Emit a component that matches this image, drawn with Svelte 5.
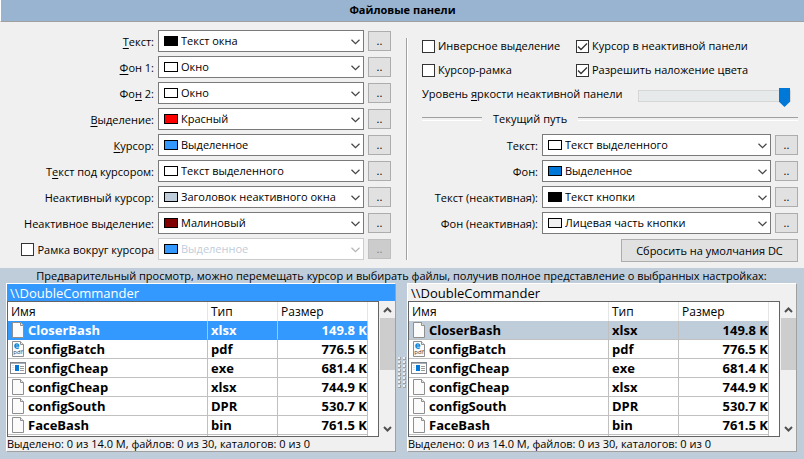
<script>
  const cursorColors = [
    { id: 'text', pre: '', key: 'Т', post: 'екст:', value: 'Текст окна', color: '#000000' },
    { id: 'back1', pre: '', key: 'Ф', post: 'он 1:', value: 'Окно', color: '#ffffff' },
    { id: 'back2', pre: 'Фо', key: 'н', post: ' 2:', value: 'Окно', color: '#ffffff' },
    { id: 'mark', pre: '', key: 'В', post: 'ыделение:', value: 'Красный', color: '#ff0000' },
    { id: 'cursor', pre: '', key: 'К', post: 'урсор:', value: 'Выделенное', color: '#3399ff' },
    { id: 'cursortext', pre: 'Т', key: 'е', post: 'кст под курсором:', value: 'Текст выделенного', color: '#ffffff' },
    { id: 'inactivecursor', pre: 'Неактивный курсор:', key: '', post: '', value: 'Заголовок неактивного окна', color: '#bfcddb' },
    { id: 'inactivemark', pre: 'Неактивное выделение:', key: '', post: '', value: 'Малиновый', color: '#800000' }
  ];
  const pathColors = [
    { id: 'ptext', label: 'Текст:', value: 'Текст выделенного', color: '#ffffff' },
    { id: 'pback', label: 'Фон:', value: 'Выделенное', color: '#0078d7' },
    { id: 'pitext', label: 'Текст (неактивная):', value: 'Текст кнопки', color: '#000000' },
    { id: 'piback', label: 'Фон (неактивная):', value: 'Лицевая часть кнопки', color: '#f0f0f0' }
  ];
  const files = [
    { name: 'CloserBash', type: 'xlsx', size: '149.8 K', icon: 'page' },
    { name: 'configBatch', type: 'pdf', size: '776.5 K', icon: 'pdf' },
    { name: 'configCheap', type: 'exe', size: '681.4 K', icon: 'exe' },
    { name: 'configCheap', type: 'xlsx', size: '744.9 K', icon: 'page' },
    { name: 'configSouth', type: 'DPR', size: '530.7 K', icon: 'page' },
    { name: 'FaceBash', type: 'bin', size: '761.5 K', icon: 'page' },
    { name: '', type: '', size: '', icon: 'page' }
  ];
  const dots = Array.from({ length: 8 }, (_, i) => i);

  let brightness = $state(100);
  let inverse = $state(false);
  let inactiveCursor = $state(true);
  let frameCursor = $state(false);
  let overlay = $state(true);
  let frameAround = $state(false);
</script>

{#snippet picker(id, value, color, disabled)}
  <div class="picker">
    <select {id} {disabled} aria-label={id === 'frame' ? 'Цвет рамки' : undefined}><option>{value}</option></select>
    <span class="swatch" style="background:{color}"></span>
    <svg class="chevron" class:dim={disabled} viewBox="0 0 9 6" width="9" height="6" aria-hidden="true">
      <path d="M0.5 0.8 L4.5 4.6 L8.5 0.8" />
    </svg>
  </div>
  <button class="more" {disabled}>..</button>
{/snippet}

{#snippet fileIcon(kind)}
  <svg class="icon" viewBox="0 0 16 18" width="16" height="18" aria-hidden="true">
    {#if kind === 'exe'}
      <rect x="0.5" y="3.5" width="15" height="11" fill="#fff" stroke="#80868c" />
      <path d="M1 4.5h14" stroke="#a9afb5" />
      <rect x="5" y="6" width="4" height="6" fill="#0078d7" />
      <path d="M10 7.5h4M10 9.5h4M10 11.5h4" stroke="#9a9a9a" />
      <path d="M2 6.5h2M2 8.5h2M2 10.5h2" stroke="#e1e1e1" />
    {:else}
      <path d="M2.500 1.500H10.500L13.500 4.500V16.500H2.500Z" fill="#fbfbfb" stroke="#8f8f8f" />
      <path d="M10.500 1.500V4.500H13.500" fill="#e9e9e9" stroke="#8f8f8f" />
      {#if kind === 'pdf'}
        <path d="M8.800 7.700C7.600 8.700 5 8.500 4.900 6.200 C4.800 3.200 8.900 3 8.700 6H5.200" fill="none" stroke="#0a84d8" stroke-width="1.300" />
        <text x="8" y="14" text-anchor="middle" font-size="6" font-weight="400" fill="#333">pdf</text>
      {/if}
    {/if}
  </svg>
{/snippet}

{#snippet panel(active)}
  <section class="panel" class:active>
    <div class="path">\\DoubleCommander</div>
    <div class="body">
      <div class="list">
        <table>
          <colgroup><col /><col class="c-type" /><col class="c-size" /><col class="c-rest" /></colgroup>
          <thead><tr><th>Имя</th><th>Тип</th><th>Размер</th><th class="rest"></th></tr></thead>
          <tbody>
            {#each files as f, i}
              <tr class:current={i === 0}>
                <td class="name"><div>{@render fileIcon(f.icon)}<span>{f.name}</span></div></td>
                <td>{f.type}</td>
                <td class="size">{f.size}</td>
                <td class="rest"></td>
              </tr>
            {/each}
          </tbody>
        </table>
      </div>
      <div class="scroll">
        <button class="arrow" aria-label="Вверх">
          <svg viewBox="0 0 9 6" width="9" height="6"><path d="M1 5 L4.500 1.500 L8 5" /></svg>
        </button>
        <div class="rail"><div class="thumb"></div></div>
        <button class="arrow" aria-label="Вниз">
          <svg viewBox="0 0 9 6" width="9" height="6"><path d="M1 1 L4.500 4.500 L8 1" /></svg>
        </button>
      </div>
    </div>
    <div class="status">Выделено: 0 из 14.0 M, файлов: 0 из 30, каталогов: 0 из 0</div>
  </section>
{/snippet}

<main>
  <h1>Файловые панели</h1>

  <div class="settings">
    <div class="left">
      {#each cursorColors as c}
        <label for={c.id}>{c.pre}{#if c.key}<u>{c.key}</u>{/if}{c.post}</label>
        {@render picker(c.id, c.value, c.color, false)}
      {/each}
      <label class="check"><input type="checkbox" bind:checked={frameAround} />Рамка вокруг курсора</label>
      {@render picker('frame', 'Выделенное', '#3399ff', !frameAround)}
    </div>

    <div class="rule"></div>

    <div class="right">
      <div class="checks">
        <label class="check"><input type="checkbox" bind:checked={inverse} />Инверсное выделение</label>
        <label class="check"><input type="checkbox" bind:checked={inactiveCursor} />Курсор в неактивной панели</label>
        <label class="check"><input type="checkbox" bind:checked={frameCursor} />Курсор-рамка</label>
        <label class="check"><input type="checkbox" bind:checked={overlay} />Разрешить наложение цвета</label>
      </div>
      <div class="level">
        <label for="level">Уровень <u>я</u>ркости неактивной панели</label>
        <input id="level" type="range" min="0" max="100" bind:value={brightness} />
      </div>
      <div class="divider"><span>Текущий путь</span></div>
      <div class="paths">
        {#each pathColors as c}
          <label for={c.id}>{c.label}</label>
          {@render picker(c.id, c.value, c.color, false)}
        {/each}
      </div>
      <button class="reset">Сбросить на умолчания DC</button>
    </div>
  </div>

  <div class="preview">
    <p>Предварительный просмотр, можно перемещать курсор и выбирать файлы, получив полное представление о выбранных настройках:</p>
    <div class="panels">
      {@render panel(true)}
      <div class="splitter">
        {#each dots as d}<i></i><i></i>{/each}
      </div>
      {@render panel(false)}
    </div>
  </div>
</main>

<style>
  :global(body) { margin: 0; background: #bfcddb; }
  main, main :global(*) { box-sizing: border-box; }
  main { font: 11px/16px "Open Sans", "Noto Sans", sans-serif; color: #000; background: #f0f0f0; }
  button, select, input { font: inherit; margin: 0; color: inherit; }
  u { text-decoration: underline; text-underline-offset: 2px; }

  h1 {
    margin: 0; height: 22px; font-size: 11px; line-height: 20px; font-weight: 700; text-align: center;
    background: #99b4d1; border-bottom: 1px solid #a0a0a0; border-left: 1px solid #fff;
  }

  .settings { display: grid; grid-template-columns: minmax(0, 406fr) 2px minmax(0, 396fr); }
  .left, .paths { display: grid; column-gap: 4px; row-gap: 4px; grid-auto-rows: 22px; align-items: center; }
  .left { grid-template-columns: 154px minmax(0, 1fr) 23px; padding: 8px 15px 8px 0; }
  .paths { grid-template-columns: 116px minmax(0, 1fr) 23px; }
  .left > label, .paths > label { justify-self: end; white-space: nowrap; padding-top: 1px; }
  .rule { margin: 16px 0 8px; border-left: 1px solid #a0a0a0; border-right: 1px solid #fff; }
  .right { padding: 12px 6px 6px 14px; display: flex; flex-direction: column; }

  .picker { position: relative; height: 22px; }
  select {
    appearance: none; display: block; width: 100%; height: 22px; padding: 0 18px 0 22px;
    border: 1px solid #7a7a7a; border-radius: 0; background: #fff; line-height: 20px;
  }
  select:disabled { border-color: #ccc; color: #bfcddb; opacity: 1; }
  .swatch { position: absolute; left: 6px; top: 6px; width: 14px; height: 10px; border: 1px solid #000; }
  .chevron { position: absolute; right: 4px; top: 9px; pointer-events: none; }
  .chevron path { fill: none; stroke: #444; stroke-width: 1.2; }
  .chevron.dim path { stroke: #b4b4b4; }
  .more, .reset { background: #e1e1e1; border: 1px solid #adadad; border-radius: 0; padding: 0; }
  .more { height: 20px; line-height: 16px; }
  .more:disabled { background: #ccc; border-color: #bfbfbf; color: #838383; }
  .reset { align-self: flex-end; width: 177px; height: 23px; margin-top: 5px; }

  .check { display: flex; align-items: center; gap: 3px; white-space: nowrap; }
  .check input {
    appearance: none; width: 13px; height: 13px; flex: none; background: #fff; border: 1px solid #333;
  }
  .check input:checked {
    background: #fff url("data:image/svg+xml,%3Csvg xmlns='http://www.w3.org/2000/svg' viewBox='0 0 11 11'%3E%3Cpath d='M1 5.500l3 3L10 2.500' fill='none' stroke='%23333' stroke-width='1.300'/%3E%3C/svg%3E") center / 11px 11px no-repeat;
  }
  .checks { display: grid; grid-template-columns: 154px 1fr; grid-auto-rows: 24px; align-items: center; }

  .level { display: flex; justify-content: space-between; align-items: flex-end; height: 25px; padding: 0 7px 5px 0; }
  .level label { align-self: flex-start; line-height: 24px; white-space: nowrap; }
  .level input { appearance: none; width: 153px; height: 12px; background: none; }
  .level input::-webkit-slider-runnable-track { height: 12px; background: #e7eaea; border: 1px solid #d6d6d6; }
  .level input::-webkit-slider-thumb {
    appearance: none; width: 11px; height: 19px; margin-top: -3px; background: #0078d7;
    clip-path: polygon(0 0, 100% 0, 100% 72%, 50% 100%, 0 72%);
  }

  .divider { display: flex; align-items: center; gap: 11px; height: 24px; margin-bottom: 3px; }
  .divider::before, .divider::after { content: ""; height: 2px; border-top: 1px solid #a0a0a0; border-bottom: 1px solid #fff; }
  .divider::before { width: 60px; }
  .divider::after { flex: 1; }

  .preview { background: #bfcddb; padding: 0 7px 7px 6px; }
  .preview p { margin: 0; height: 15px; line-height: 16px; text-align: center; white-space: nowrap; }
  .panels { display: flex; }
  .splitter { width: 11px; display: grid; grid-template-columns: 3px 3px; grid-auto-rows: 3px; gap: 1px 2px; place-content: center; padding-top: 9px; }
  .splitter i { background: #e9eef3; border-right: 1px solid #a0a0a0; border-bottom: 1px solid #a0a0a0; }

  .panel { flex: 1 1 0; min-width: 0; background: #f0f0f0; border: 1px solid #a0a0a0; border-top-color: #fff; border-left-color: #fff; }
  .path { height: 17px; padding-left: 3px; font-size: 13px; line-height: 19px; }
  .active .path { background: #3399ff; color: #fff; }
  .body { display: flex; }
  .list { flex: 1; min-width: 0; height: 136px; overflow: hidden; background: #fff; border: 1px solid #646464; }
  .scroll { width: 16px; display: flex; flex-direction: column; padding-left: 1px; }
  .arrow { height: 17px; padding: 0; border: 0; background: none; display: grid; place-items: center; }
  .arrow path { fill: none; stroke: #505050; stroke-width: 2; }
  .rail { flex: 1; }
  .thumb { height: 52px; background: #cdcdcd; }
  .status { height: 14px; line-height: 14px; white-space: nowrap; }

  table { width: 100%; table-layout: fixed; border-collapse: separate; border-spacing: 0; }
  .c-type { width: 70px; }
  .c-size { width: 90px; }
  .c-rest { width: 10px; }
  th, td { height: 19px; padding: 0 0 0 3px; text-align: left; white-space: nowrap; }
  th { font-size: 12px; font-weight: 400; line-height: 18px; border-right: 1px solid #e5e5e5; }
  td { font-size: 13px; font-weight: 700; line-height: 18px; border-right: 1px solid #c0c0c0; border-bottom: 1px solid #c0c0c0; }
  .rest { border: 0; padding: 0; }
  .name div { display: flex; height: 18px; align-items: center; gap: 2px; }
  .name { padding-left: 2px; }
  .size { text-align: right; padding-right: 0; }
  .icon { flex: none; }
  .current td:not(.rest) { background: #bfcddb; }
  .active .current td:not(.rest) { background: #3399ff; color: #fff; border-bottom-color: #3399ff; }
</style>
